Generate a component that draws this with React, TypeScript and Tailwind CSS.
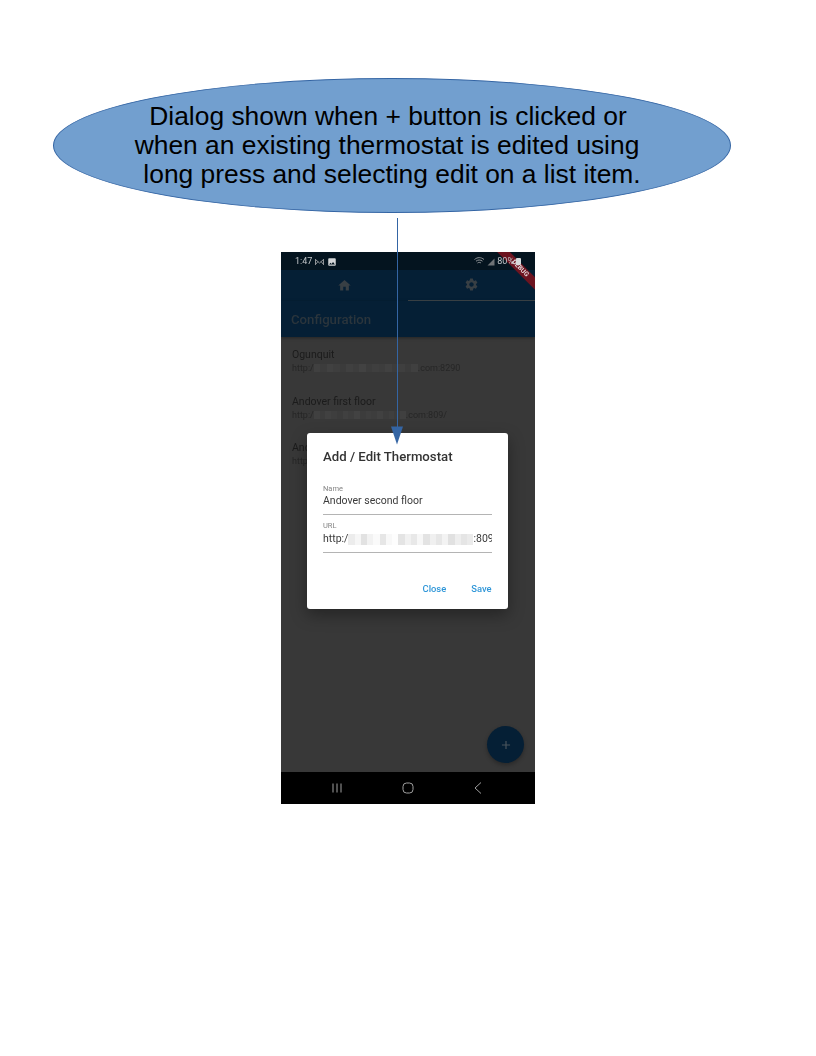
import { MdHome, MdSettings, MdImage, MdAdd } from "react-icons/md";

// pixelated strip standing in for the blurred host names
function Blur({ width, colors, height = 8 }: { width: number; colors: string[]; height?: number }) {
  return (
    <span className="inline-flex align-middle overflow-hidden" style={{ width, height }}>
      {colors.map((c, i) => (
        <span key={i} className="flex-1 h-full" style={{ backgroundColor: c }} />
      ))}
    </span>
  );
}

const darkA = ["#404040", "#3c3c3c", "#414141", "#3e3e3e", "#3b3b3b", "#404040", "#3d3d3d", "#424242", "#3c3c3c", "#3f3f3f", "#3d3d3d", "#414141", "#3c3c3c", "#3f3f3f", "#3b3b3b", "#404040"];
const light = ["#ececec", "#f6f6f6", "#e2e2e2", "#f2f2f2", "#fafafa", "#e6e6e6", "#f8f8f8", "#fdfdfd", "#e4e4e4", "#f1f1f1", "#e8e8e8", "#f7f7f7", "#e3e3e3", "#f0f0f0", "#e7e7e7", "#f3f3f3", "#e1e1e1", "#eeeeee", "#e5e5e5", "#ebebeb"];

function ListRow({ title, before, blur, after }: { title: string; before: string; blur: number; after: string }) {
  return (
    <div className="h-[46.500px] pl-[11px]">
      <div className="text-[10.5px] leading-[14px] text-[#1b1b1b]">{title}</div>
      <div className="flex items-center text-[9px] leading-[12px] text-[#262626] whitespace-nowrap">
        <span>{before}</span>
        <Blur width={blur} colors={darkA} />
        <span>{after}</span>
      </div>
    </div>
  );
}

function Field({ label, children }: { label: string; children: React.ReactNode }) {
  return (
    <div className="border-b border-[#b4b4b4]">
      <div className="pt-[1px] text-[7.5px] leading-[10px] text-[#858585]">{label}</div>
      <div className="text-[10.5px] leading-[15px] text-[#3a3a3a] whitespace-nowrap overflow-hidden">{children}</div>
    </div>
  );
}

function Phone() {
  return (
    <div className="relative w-[254px] h-[552px] ml-[281px] mt-[39px] flex flex-col bg-[#383838] overflow-hidden blur-[0.3px] font-['Roboto',sans-serif]">
      <div className="h-[18px] bg-[#04141f] flex items-center justify-between pt-[1px] pl-[14px] pr-[14px] text-[9px] text-[#c4c8cb]">
        <div className="flex items-center gap-[3px]">
          <span>1:47</span>
          <svg width="9" height="8" viewBox="0 0 9 8" fill="none" stroke="#8f9396" strokeWidth="1">
            <path d="M.5 1v6M8.500 1v6M.5 1.500 4.500 5l4-3.500M.5 6.500l2.500-3M8.500 6.500l-2.500-3" />
          </svg>
          <MdImage size={10} color="#d4d6d8" />
        </div>
        <div className="relative z-10 flex items-center gap-[2px]">
          <svg width="11" height="9" viewBox="0 0 11 9" fill="none" stroke="#8f9396" strokeWidth="1">
            <path d="M.5 2.500C3.500 0 7 0 10 2.500M2 4.200C4 2.600 6.500 2.600 8.500 4.200M3.500 6C4.500 5.200 6 5.200 7 6" />
          </svg>
          <svg width="8" height="8" viewBox="0 0 8 8" fill="#6f7376">
            <path d="M7.500 .5v7h-7z" />
          </svg>
          <span>80%</span>
          <span className="w-[5px] h-[7px] bg-[#d8dadb] rounded-[1px]" />
        </div>
      </div>
      <div className="h-[31px] bg-[#051f35] flex">
        <div className="w-[127px] flex items-center justify-center pb-[1px]">
          <MdHome size={15} color="#383f44" />
        </div>
        <div className="flex-1 flex items-center justify-center border-b border-[#3c4348] pb-[1px]">
          <MdSettings size={15} color="#383f44" />
        </div>
      </div>
      <div className="h-[36px] pt-[2px] bg-[#051f35] flex items-center pl-[10px] text-[13.200px] font-medium text-[#2b353c] shadow-[0_1px_3px_rgba(0,0,0,0.35)]">
        Configuration
      </div>
      <div className="flex-1 pt-[11px]">
        <ListRow title="Ogunquit" before="http:/" blur={104} after=".com:8290" />
        <ListRow title="Andover first floor" before="http:/" blur={92} after=".com:809/" />
        <ListRow title="Andover second floor" before="http:/" blur={92} after=".com:809" />
      </div>
      <div className="h-[32px] bg-black flex items-center justify-center gap-[58.500px] pr-[1px]">
        <svg width="12" height="12" viewBox="0 0 12 12" stroke="#a0a0a0" strokeWidth="1" fill="none">
          <path d="M2 1.500v9M6 1.500v9M10 1.500v9" />
        </svg>
        <svg width="12" height="12" viewBox="0 0 12 12" stroke="#a0a0a0" strokeWidth="1" fill="none">
          <rect x="1" y="1" width="10" height="10" rx="3.500" />
        </svg>
        <svg width="12" height="12" viewBox="0 0 12 12" stroke="#a0a0a0" strokeWidth="1" fill="none">
          <path d="M9 .5 3 6l6 5.500" />
        </svg>
      </div>

      {/* floating button */}
      <div className="absolute left-[206px] top-[474px] w-[37px] h-[37px] rounded-full bg-[#051f35] flex items-center justify-center shadow-[0_2px_4px_rgba(0,0,0,0.3)]">
        <MdAdd size={14} color="#4a555d" />
      </div>

      {/* debug ribbon */}
      <div className="absolute right-[-25px] top-[11.500px] w-[80px] h-[9px] bg-[#6d1420] rotate-45 flex items-center justify-center text-[6.500px] font-bold text-[#e8d8da]">
        DEBUG
      </div>

      {/* dialog */}
      <div className="absolute left-[26px] top-[181px] w-[201px] h-[176px] bg-white rounded-[3px] shadow-[0_6px_16px_rgba(0,0,0,0.35)] pt-[15px] pl-[16px] pr-[16px] flex flex-col">
        <div className="text-[13.200px] leading-[18px] font-medium text-[#333333]">Add / Edit Thermostat</div>
        <div className="mt-[17px]">
          <Field label="Name">
            <div className="mt-[-1px] pb-[6px]">Andover second floor</div>
          </Field>
        </div>
        <div className="mt-[5px]">
          <Field label="URL">
            <div className="flex items-center pb-[6px]">
              <span>http:/</span>
              <span className="shrink-0"><Blur width={125} colors={light} height={11} /></span>
              <span>:809</span>
            </div>
          </Field>
        </div>
        <div className="flex justify-end gap-[25px] mt-[29px] pr-[0.500px] text-[9.400px] font-medium text-[#2f96d8]">
          <span>Close</span>
          <span>Save</span>
        </div>
      </div>
    </div>
  );
}

export default function App() {
  return (
    <div className="relative w-[816px] h-[1056px] bg-white overflow-hidden font-['Liberation_Sans',sans-serif] pt-[78px]">
      <div className="ml-[53px] w-[678px] h-[135px] rounded-[50%] bg-[#729fcf] border border-[#3465a4] flex flex-col items-center justify-center text-[26.400px] leading-[29px] text-black">
        <div className="ml-[-8px]">Dialog shown when + button is clicked or</div>
        <div className="ml-[-10px]">when an existing thermostat is edited using</div>
        <div>long press and selecting edit on a list item.</div>
      </div>
      <Phone />
      {/* callout arrow over the phone */}
      <svg className="absolute left-[388px] top-[218px]" width="18" height="228" viewBox="0 0 18 228">
        <path d="M9.500 0v210" stroke="#3465a4" strokeWidth="1" />
        <path d="M3 208.500h12l-6 18z" fill="#3465a4" />
      </svg>
    </div>
  );
}
